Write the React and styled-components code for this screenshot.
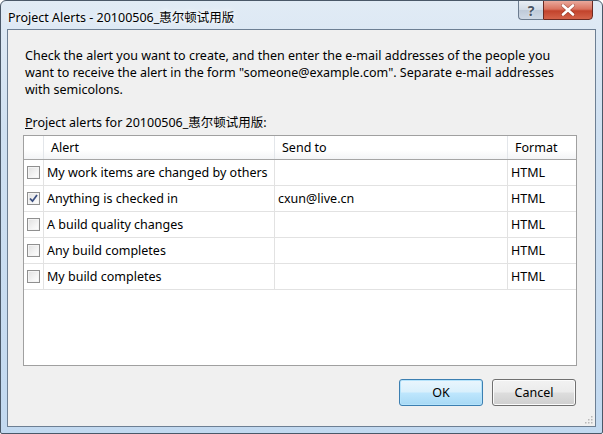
import styled, { createGlobalStyle } from "styled-components";

const GlobalStyle = createGlobalStyle`
  html, body { margin: 0; padding: 0; background: #fff; }
  body { font-family: "Segoe UI", "Noto Sans", "Noto Sans CJK SC", sans-serif; }
`;

const alerts = [
  { label: "My work items are changed by others", checked: false, to: "" },
  { label: "Anything is checked in", checked: true, to: "cxun@live.cn" },
  { label: "A build quality changes", checked: false, to: "" },
  { label: "Any build completes", checked: false, to: "" },
  { label: "My build completes", checked: false, to: "" },
];

function App() {
  return (
    <>
      <GlobalStyle />
      <Window>
        <TitleBar>
          <Title>Project Alerts - 20100506_惠尔顿试用版</Title>
          <Caption>
            <HelpBtn>?</HelpBtn>
            <CloseBtn>
              <svg width="14" height="12" viewBox="0 0 14 12">
                <path d="M2 1.5 L12 10.5 M12 1.5 L2 10.5" stroke="#5a1a10" strokeWidth="4" strokeLinecap="round" opacity="0.35" />
                <path d="M2 1.5 L12 10.5 M12 1.5 L2 10.5" stroke="#fff" strokeWidth="2.6" strokeLinecap="round" />
              </svg>
            </CloseBtn>
          </Caption>
        </TitleBar>
        <Client>
          <Intro>
            Check the alert you want to create, and then enter the e-mail addresses of the people you
            <br />
            want to receive the alert in the form "someone@example.com". Separate e-mail addresses
            <br />
            with semicolons.
          </Intro>
          <Label>
            <u>P</u>roject alerts for 20100506_惠尔顿试用版:
          </Label>
          <List>
            <HeadRow>
              <HeadCell />
              <HeadCell>Alert</HeadCell>
              <HeadCell>Send to</HeadCell>
              <HeadCell $last>Format</HeadCell>
            </HeadRow>
            {alerts.map((a) => (
              <Row key={a.label}>
                <CheckCell>
                  <Box>
                    {a.checked && (
                      <svg width="9" height="9" viewBox="0 0 9 9">
                        <path d="M1 4.5 L3.5 7.2 L8 1" fill="none" stroke="#3b4f80" strokeWidth="1.8" />
                      </svg>
                    )}
                  </Box>
                </CheckCell>
                <Cell>{a.label}</Cell>
                <Cell>{a.to}</Cell>
                <Cell $last>HTML</Cell>
              </Row>
            ))}
          </List>
          <Buttons>
            <Button $default>OK</Button>
            <Button>Cancel</Button>
          </Buttons>
          <Grip>
            <svg width="10" height="10" viewBox="0 0 10 10">
              {[[8, 2], [8, 5], [5, 5], [8, 8], [5, 8], [2, 8]].map(([x, y]) => (
                <rect key={x + "-" + y} x={x} y={y} width="1.5" height="1.5" fill="#b8b8b8" />
              ))}
            </svg>
          </Grip>
        </Client>
      </Window>
    </>
  );
}

const Window = styled.div`
  width: 603px;
  height: 434px;
  box-sizing: border-box;
  border: 1px solid #4a5868;
  border-radius: 6px 6px 2px 2px;
  background: linear-gradient(180deg, #e1ebf5 0%, #cfe0f1 30%, #c2d9f0 100%);
  display: flex;
  flex-direction: column;
  padding: 0 6px 6px 6px;
  overflow: hidden;
`;

const TitleBar = styled.div`
  height: 28px;
  display: flex;
  align-items: flex-start;
  justify-content: space-between;
`;

const Title = styled.div`
  font-size: 12.5px;
  color: #000;
  padding: 6px 0 0 1px;
  text-shadow: 0 0 8px #fff, 0 0 4px #fff;
`;

const Caption = styled.div`
  display: flex;
  margin-right: 3px;
  margin-top: -1px;
`;

const HelpBtn = styled.div`
  width: 25px;
  height: 20px;
  box-sizing: border-box;
  border: 1px solid #6c7c8f;
  border-right: none;
  border-radius: 0 0 0 4px;
  background: linear-gradient(180deg, #e9eef4 0%, #d2dbe6 48%, #bfcad8 52%, #cfd9e5 100%);
  color: #4a5563;
  font-size: 14px;
  font-weight: bold;
  display: flex;
  align-items: center;
  justify-content: center;
  text-shadow: 0 0 2px #fff;
`;

const CloseBtn = styled.div`
  width: 50px;
  height: 20px;
  box-sizing: border-box;
  border: 1px solid #6b2a22;
  border-radius: 0 0 4px 0;
  background: linear-gradient(180deg, #e9a99c 0%, #d9735f 45%, #c2432c 55%, #d4634a 100%);
  display: flex;
  align-items: center;
  justify-content: center;
`;

const Client = styled.div`
  flex: 1;
  position: relative;
  border: 1px solid #6d7f93;
  background: #f0f0f0;
  padding: 17px 18px 0 15px;
  display: flex;
  flex-direction: column;
  font-size: 12.5px;
  color: #000;
`;

const Intro = styled.p`
  margin: 0;
  padding-left: 2px;
  line-height: 17px;
  white-space: nowrap;
`;

const Label = styled.div`
  margin-top: 16px;
  padding-left: 2px;
  line-height: 17px;
`;

const List = styled.div`
  margin-top: 4px;
  height: 231px;
  box-sizing: border-box;
  border: 1px solid #a0a0a0;
  background: #fff;
  display: flex;
  flex-direction: column;
`;

const columns = "20px 231px 233px 1fr";

const HeadRow = styled.div`
  display: grid;
  grid-template-columns: ${columns};
  height: 24px;
  box-sizing: border-box;
  border-bottom: 1px solid #a5a5a5;
  background: linear-gradient(180deg, #ffffff 0%, #ffffff 60%, #f3f4f6 100%);
`;

const HeadCell = styled.div`
  display: flex;
  align-items: center;
  padding-left: 7px;
  border-right: ${(p) => (p.$last ? "none" : "1px solid #e3e6ea")};
`;

const Row = styled.div`
  display: grid;
  grid-template-columns: ${columns};
  height: 26px;
  box-sizing: border-box;
  border-bottom: 1px solid #e2e2e2;
`;

const Cell = styled.div`
  display: flex;
  align-items: center;
  padding-left: 3px;
  white-space: nowrap;
  border-right: ${(p) => (p.$last ? "none" : "1px solid #e2e2e2")};
`;

const CheckCell = styled(Cell)`
  padding-left: 3px;
`;

const Box = styled.div`
  width: 13px;
  height: 13px;
  box-sizing: border-box;
  border: 1px solid #8f8f8f;
  background: linear-gradient(135deg, #e0e0e0 0%, #f4f4f4 60%, #ffffff 100%);
  box-shadow: inset 0 0 0 1px #f4f4f4;
  display: flex;
  align-items: center;
  justify-content: center;
`;

const Buttons = styled.div`
  display: flex;
  justify-content: flex-end;
  gap: 9px;
  margin-top: 13px;
  padding-right: 1px;
`;

const Button = styled.div`
  width: 84px;
  height: 27px;
  box-sizing: border-box;
  border: 1px solid ${(p) => (p.$default ? "#3c7fb1" : "#707070")};
  border-radius: 3px;
  background: ${(p) =>
    p.$default
      ? "linear-gradient(180deg, #eaf6fd 0%, #d9f0fc 48%, #bee6fd 52%, #a7d9f5 100%)"
      : "linear-gradient(180deg, #f2f2f2 0%, #ebebeb 48%, #dddddd 52%, #cfcfcf 100%)"};
  box-shadow: inset 0 0 0 1px ${(p) => (p.$default ? "#b5e3fb" : "#fbfbfb")};
  display: flex;
  align-items: center;
  justify-content: center;
  font-size: 12.5px;
`;

const Grip = styled.div`
  position: absolute;
  right: 2px;
  bottom: 2px;
  line-height: 0;
`;

export default App;
